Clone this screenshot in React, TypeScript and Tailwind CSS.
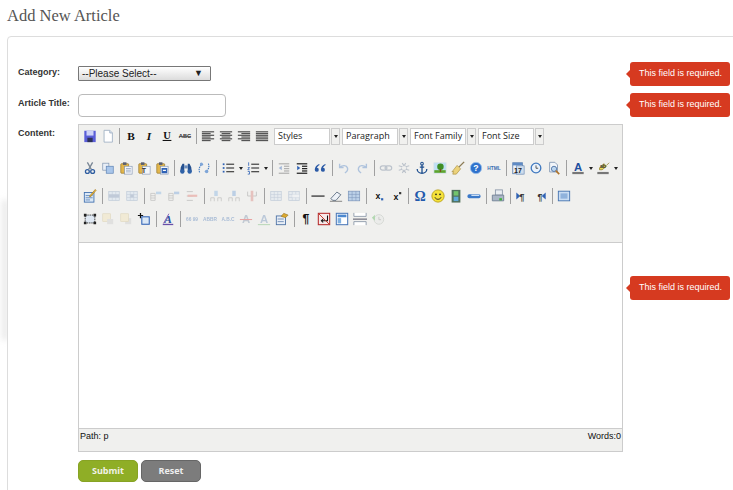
import React from 'react';

const T = ({ c, s = 12, f = 'Liberation Serif', w = 'bold', i = false, y = 12, fill = '#111' }: { c: string; s?: number; f?: string; w?: string; i?: boolean; y?: number; fill?: string }) => (
  <text x="8" y={y} textAnchor="middle" fontFamily={f} fontWeight={w} fontStyle={i ? 'italic' : 'normal'} fontSize={s} fill={fill}>{c}</text>
);

// horizontal bars, used by the align and list icons
const Bars = ({ rows, color = '#444', h = 1.4 }: { rows: [number, number, number][]; color?: string; h?: number }) => (
  <>
    {rows.map(([x, y, w], i) => <rect key={i} x={x} y={y} width={w} height={h} fill={color} />)}
  </>
);

const align = (kind: string) => {
  const ys = [2.5, 4.5, 6.5, 8.5, 10.5, 12.5];
  const ws = [14, 10, 14, 10, 14, 10];
  return ys.map((y, i): [number, number, number] => {
    const w = kind === 'full' ? 14 : ws[i];
    const x = kind === 'left' || kind === 'full' ? 1 : kind === 'right' ? 15 - w : 8 - w / 2;
    return [x, y, w];
  });
};

const Clip = ({ children }: { children?: React.ReactNode }) => (
  <>
    <rect x="2" y="3" width="9" height="11" rx="1" fill="#e2b64c" stroke="#8a6a20" strokeWidth=".7" />
    <rect x="4.500" y="1.500" width="4" height="3" fill="#5a5f70" />
    <rect x="6.500" y="6" width="8.500" height="9" fill="#f4f6fa" stroke="#7f93b0" strokeWidth=".7" />
    {children}
  </>
);

const Grid = ({ x = 2, y = 3, w = 12, h = 10, fill = '#cfe0f2' }: { x?: number; y?: number; w?: number; h?: number; fill?: string }) => (
  <>
    <rect x={x} y={y} width={w} height={h} fill={fill} stroke="#7a94b8" strokeWidth=".8" />
    <path d={`M${x} ${y + h / 3}h${w}M${x} ${y + (2 * h) / 3}h${w}M${x + w / 3} ${y}v${h}M${x + (2 * w) / 3} ${y}v${h}`} stroke="#7a94b8" strokeWidth=".6" />
  </>
);

const Tiny = ({ c, fill = '#3b6cb0' }: { c: string; fill?: string }) => <T c={c} s={5.5} f="Liberation Sans" y={10} fill={fill} />;

const Rows = ({ accent }: { accent: string }) => (
  <>
    <path d="M2 5h5v8H2zM2 7.700h5M2 10.300h5" fill="none" stroke="#777" strokeWidth=".8" />
    <rect x="8" y="3" width="6" height="3" fill={accent} />
  </>
);

const Cols = ({ accent }: { accent: string }) => (
  <>
    <path d="M2 14v-4h4v4M10 14v-4h4v4" fill="none" stroke="#777" strokeWidth=".8" />
    <rect x="6" y="2" width="4" height="6" fill={accent} />
  </>
);

const ICONS: Record<string, React.ReactNode> = {
  save: (
    <>
      <rect x="1.500" y="2" width="13" height="13" fill="#5a5ed8" />
      <rect x="4" y="2" width="8" height="5.500" fill="#cfd3f8" />
      <rect x="5" y="10" width="6" height="5" fill="#2d3158" />
    </>
  ),
  newdoc: (
    <>
      <path d="M3.500 1.500h6.500l3 3v10.500h-9.500z" fill="#fff" stroke="#9fb0c4" />
      <path d="M10 1.500v3h3" fill="#dbe4ef" stroke="#9fb0c4" />
    </>
  ),
  bold: <T c="B" s={13} />,
  italic: <T c="I" i s={13} />,
  underline: (
    <>
      <T c="U" y={11} s={12} />
      <rect x="3" y="12.500" width="10" height="1.200" fill="#111" />
    </>
  ),
  strike: (
    <>
      <T c="ABC" s={6.500} f="Liberation Sans" y={10.500} fill="#333" />
      <rect x="1" y="8" width="14" height="1" fill="#555" />
    </>
  ),
  left: <Bars rows={align('left')} color="#555" />,
  center: <Bars rows={align('center')} color="#555" />,
  right: <Bars rows={align('right')} color="#555" />,
  full: <Bars rows={align('full')} color="#555" />,
  cut: (
    <>
      <path d="M5 1.500l4.500 8M11 1.500l-4.500 8" stroke="#7a8796" strokeWidth="1.500" fill="none" />
      <circle cx="5" cy="12" r="2.200" fill="none" stroke="#2f5da0" strokeWidth="1.500" />
      <circle cx="11" cy="12" r="2.200" fill="none" stroke="#2f5da0" strokeWidth="1.500" />
    </>
  ),
  copy: (
    <>
      <rect x="2" y="2.500" width="7" height="8" fill="#e8eef6" stroke="#7f93b0" strokeWidth=".8" />
      <rect x="6" y="6" width="8" height="8" fill="#a9c6ea" stroke="#5d82b4" strokeWidth=".8" />
    </>
  ),
  paste: <Clip><Bars rows={[[8, 8, 5.500], [8, 10, 5.500], [8, 12, 5.500]]} color="#8fa3c0" h={.9} /></Clip>,
  pastetext: <Clip><T c="T" s={8} f="Liberation Sans" y={14} fill="#333" /></Clip>,
  pasteword: <Clip><rect x="7.500" y="8" width="6.500" height="6" fill="#2f62b5" /><Bars rows={[[9, 10, 3.500]]} color="#fff" /></Clip>,
  find: (
    <>
      <path d="M2 7l2-4h2v9H1.500zM14 7l-2-4h-2v9h4.500z" fill="#25508f" />
      <rect x="6" y="5" width="4" height="3.500" fill="#6d8fbe" />
      <circle cx="3.800" cy="12" r="2.500" fill="#2f62a8" />
      <circle cx="12.200" cy="12" r="2.500" fill="#2f62a8" />
    </>
  ),
  replace: (
    <>
      <path d="M3 13C1.500 9 3 5 7 4" fill="none" stroke="#3f78c0" strokeWidth="1.300" strokeDasharray="1.500 1" />
      <path d="M13 3c1.500 4 0 8-4 9" fill="none" stroke="#3f78c0" strokeWidth="1.300" strokeDasharray="1.500 1" />
      <circle cx="11" cy="12" r="2" fill="#7fa6d8" />
      <circle cx="5" cy="3.500" r="1.800" fill="#7fa6d8" />
    </>
  ),
  ul: (
    <>
      <Bars rows={[[6, 3, 9], [6, 7.300, 9], [6, 11.500, 9]]} />
      <Bars rows={[[2, 2.700, 2], [2, 7, 2], [2, 11.200, 2]]} color="#2f62b5" h={2} />
    </>
  ),
  ol: (
    <>
      <Bars rows={[[6, 3, 9], [6, 7.300, 9], [6, 11.500, 9]]} />
      <path d="M3 1.500v4M2 7.500h2l-2 2.500h2M2 12h2v3h-2" fill="none" stroke="#2f62b5" strokeWidth=".9" />
    </>
  ),
  outdent: (
    <>
      <Bars rows={[[2, 2.500, 12], [8, 5.300, 6], [8, 8, 6], [8, 10.700, 6], [2, 13.300, 12]]} color="#555" />
      <path d="M2 8l3.500-2.500v5z" fill="#2f62b5" />
    </>
  ),
  indent: (
    <>
      <Bars rows={[[2, 2.500, 12], [8, 5.300, 6], [8, 8, 6], [8, 10.700, 6], [2, 13.300, 12]]} color="#222" />
      <path d="M6 8L2.500 5.500v5z" fill="#2f62b5" />
    </>
  ),
  quote: (
    <>
      <path d="M7 3.500C4 5 2 7 2 10a2.300 2.300 0 1 0 2.500-2.200C5 6.300 6 5.300 7.500 4.500z" fill="#2b5aa6" />
      <path d="M14 3.500c-3 1.500-5 3.500-5 6.500a2.300 2.300 0 1 0 2.500-2.200c.5-1.500 1.500-2.500 3-3.300z" fill="#2b5aa6" />
    </>
  ),
  undo: <path d="M3 3v4.500h4.500M3.500 7C6 4.500 11 4.500 12 8c.6 2.500-1 4.500-3 5.500" fill="none" stroke="#4f82c4" strokeWidth="1.600" />,
  redo: <path d="M13 3v4.500H8.500M12.500 7C10 4.500 5 4.500 4 8c-.6 2.500 1 4.500 3 5.500" fill="none" stroke="#4f82c4" strokeWidth="1.600" />,
  link: (
    <>
      <rect x="1.500" y="5.500" width="7.500" height="5" rx="2.500" fill="none" stroke="#6f8099" strokeWidth="1.400" />
      <rect x="7" y="5.500" width="7.500" height="5" rx="2.500" fill="none" stroke="#6f8099" strokeWidth="1.400" />
    </>
  ),
  unlink: (
    <>
      <path d="M6 2.500l2 3 2-3M6 13.500l2-3 2 3M2 5.500l4 1M14 5.500l-4 1M2 10.500l4-1M14 10.500l-4-1" fill="none" stroke="#6f8099" strokeWidth="1.300" />
      <circle cx="8" cy="8" r="3" fill="none" stroke="#6f8099" strokeWidth="1.100" strokeDasharray="1.500 1" />
    </>
  ),
  anchor: (
    <>
      <circle cx="8" cy="3" r="1.500" fill="none" stroke="#1f4f8f" strokeWidth="1.200" />
      <path d="M8 4.500v9.500M5.500 7h5M2.500 9c0 3 2.500 5 5.500 5s5.500-2 5.500-5" fill="none" stroke="#1f4f8f" strokeWidth="1.500" />
    </>
  ),
  image: (
    <>
      <rect x="1" y="2" width="14" height="12" fill="#bfe0f5" stroke="#d8dfe6" strokeWidth=".8" />
      <rect x="1.500" y="10.500" width="13" height="3" fill="#5fa52c" />
      <circle cx="8.500" cy="6.500" r="3.700" fill="#3f8f25" />
      <rect x="7.700" y="9" width="1.600" height="3.500" fill="#7a4f1d" />
    </>
  ),
  cleanup: (
    <>
      <path d="M15 1L9 7" stroke="#8b7a55" strokeWidth="1.600" />
      <path d="M7 5l4 4-5 6H2l1-3-2 .5z" fill="#ecd27a" stroke="#a58a3a" strokeWidth=".7" />
    </>
  ),
  help: (
    <>
      <circle cx="8" cy="8" r="6.500" fill="#2f72cc" stroke="#9cc0ea" />
      <T c="?" s={10} f="Liberation Sans" y={11.500} fill="#fff" />
    </>
  ),
  html: <Tiny c="HTML" />,
  date: (
    <>
      <rect x="2" y="2" width="11" height="12.500" fill="#eef3f9" stroke="#5f82b0" />
      <rect x="2" y="2" width="11" height="3" fill="#5f8ac4" />
      <rect x="6" y="5.500" width="9" height="9.500" fill="#cfdded" stroke="#5f82b0" strokeWidth=".7" />
      <T c="17" s={8} f="Liberation Sans" y={13.500} fill="#222" />
    </>
  ),
  time: (
    <>
      <circle cx="8" cy="8" r="5.500" fill="#eaf2fb" stroke="#3f78bf" strokeWidth="1.500" />
      <path d="M8 5v3.300h2.500" fill="none" stroke="#333" strokeWidth=".9" />
    </>
  ),
  preview: (
    <>
      <path d="M3 1.500h6l3 3v8H3z" fill="#f3f6fa" stroke="#8498b4" />
      <circle cx="8" cy="9" r="3" fill="#bcd6ef" stroke="#4b70a3" />
      <path d="M10 11l4 4" stroke="#b0742a" strokeWidth="1.800" />
    </>
  ),
  fore: (
    <>
      <T c="A" s={13} f="Liberation Sans" y={11.500} fill="#1f4f9f" />
      <rect x="1.500" y="12.500" width="13" height="2.500" fill="#777" />
    </>
  ),
  back: (
    <>
      <path d="M4 8l5-5 3 3-5 4H4zM12 5l3-3" fill="#eadb55" stroke="#8a7a20" strokeWidth=".8" />
      <T c="ab" s={6} f="Liberation Sans" y={8} fill="#333" />
      <rect x="1.500" y="12.500" width="13" height="2.500" fill="#777" />
    </>
  ),
  tablectl: (
    <>
      <rect x="1.500" y="4" width="11" height="11" fill="#dbe8f6" stroke="#3f6fae" />
      <path d="M3 7.500h8M3 10h8M3 12.500h5" stroke="#3f6fae" strokeWidth=".8" />
      <path d="M15 1.500l-6 7-1.500.5.500-1.500 6-7z" fill="#e8b93c" stroke="#a5741d" strokeWidth=".7" />
    </>
  ),
  rowprops: (
    <>
      <Grid />
      <rect x="2" y="6.300" width="12" height="3.300" fill="#7a94b8" />
    </>
  ),
  cellprops: (
    <>
      <Grid />
      <rect x="6" y="6.300" width="4" height="3.300" fill="#7a94b8" />
    </>
  ),
  rowa: <Rows accent="#7fb0e0" />,
  rowb: <Rows accent="#6fa0d8" />,
  rowdel: (
    <>
      <path d="M2 3h7M2 8h7M2 13h7" stroke="#777" strokeWidth=".9" />
      <rect x="3" y="6.500" width="11" height="2.500" fill="#e2766c" />
    </>
  ),
  cola: <Cols accent="#7fb0e0" />,
  colb: <Cols accent="#6fa0d8" />,
  coldel: (
    <>
      <path d="M3 3v5h10V3" fill="none" stroke="#777" strokeWidth=".9" />
      <rect x="6.500" y="2" width="3" height="12" fill="#d98078" />
    </>
  ),
  split: <Grid fill="#d8e4f2" />,
  merge: (
    <>
      <Grid fill="#d8e4f2" />
      <rect x="6" y="6.300" width="8" height="3.300" fill="#eef4fb" />
    </>
  ),
  hr: <rect x="0.500" y="7.300" width="15" height="1.600" fill="#444" />,
  removefmt: (
    <>
      <path d="M2 11l7-7.500 4.500 3L8 13H4.500z" fill="#eef2f7" stroke="#5a6b80" />
      <rect x="1" y="13.500" width="14" height="1" fill="#777" />
    </>
  ),
  table: <Grid x={1.500} y={2.500} w={13} h={11} fill="#bcd1e8" />,
  sub: (
    <>
      <T c="x" s={10} f="Liberation Sans" y={11} />
      <rect x="11.500" y="10.500" width="2.500" height="2.500" fill="#2f62b5" />
    </>
  ),
  sup: (
    <>
      <T c="x" s={10} f="Liberation Sans" y={12} />
      <rect x="11.500" y="3.500" width="2.500" height="2.500" fill="#333" />
    </>
  ),
  omega: <T c={'\u03A9'} s={16} f="Liberation Serif" y={14} fill="#2259ac" />,
  smiley: (
    <>
      <circle cx="8" cy="8" r="7" fill="#f5e23a" stroke="#b8a018" />
      <circle cx="5.700" cy="6" r="1" fill="#222" />
      <circle cx="10.300" cy="6" r="1" fill="#222" />
      <path d="M4.500 9.500c1 3 6 3 7 0" fill="none" stroke="#222" />
    </>
  ),
  media: (
    <>
      <rect x="3" y="1" width="10" height="14.500" fill="#50705c" />
      <rect x="5.300" y="2.500" width="5.400" height="5" fill="#72c46c" />
      <rect x="5.300" y="8.800" width="5.400" height="5" fill="#5fa8d8" />
    </>
  ),
  bar: (
    <>
      <rect x="0.500" y="6" width="15" height="4.500" rx="2" fill="#3c79c8" />
      <rect x="5" y="6.500" width="9" height="1.500" fill="#cde0f5" />
    </>
  ),
  print: (
    <>
      <rect x="5" y="1" width="8" height="6" fill="#e9edf2" stroke="#8a97a8" />
      <path d="M1.500 7h13v6.500h-13z" fill="#aab6c6" stroke="#6f7f94" />
      <rect x="9.500" y="10.500" width="3" height="2.500" fill="#3fb03a" />
    </>
  ),
  ltr: (
    <>
      <path d="M1.500 4v8L6 8z" fill="#2f62b5" />
      <T c={'\u00B6'} s={10} f="Liberation Sans" y={12} fill="#333" />
    </>
  ),
  rtl: (
    <>
      <T c={'\u00B6'} s={10} f="Liberation Sans" y={12} fill="#333" />
      <path d="M14.500 4v8L10 8z" fill="#2f62b5" />
    </>
  ),
  fullscreen: (
    <>
      <rect x="1.500" y="2.500" width="13" height="11" fill="#c9ddf3" stroke="#3f6fae" />
      <rect x="4" y="5" width="8" height="6" fill="#8fb2dc" />
    </>
  ),
  box: (
    <>
      <rect x="2.500" y="3.500" width="11" height="9" fill="#dfe8f3" stroke="#222" strokeDasharray="1.500 1" />
      <path d="M1 2h3v3H1zM12 2h3v3h-3zM1 11h3v3H1zM12 11h3v3h-3z" fill="#222" />
    </>
  ),
  layera: (
    <>
      <rect x="2" y="2" width="9" height="9" fill="#f3e3b0" stroke="#c7b27a" strokeWidth=".7" />
      <rect x="7" y="8" width="7" height="6" fill="#c9c9c9" />
    </>
  ),
  layerb: (
    <>
      <rect x="7" y="7" width="7" height="7" fill="#c9c9c9" />
      <rect x="2" y="2" width="9" height="9" fill="#f3e3b0" stroke="#c7b27a" strokeWidth=".7" />
    </>
  ),
  abs: (
    <>
      <path d="M4 1v6M1 4h6" stroke="#111" strokeWidth="1.400" />
      <rect x="5.500" y="5.500" width="8.500" height="8.500" fill="#dbe8f6" stroke="#2f62b5" strokeWidth="1.200" />
    </>
  ),
  style: (
    <>
      <T c="A" s={13} f="Liberation Serif" i y={12} fill="#2d4f9e" />
      <path d="M9 2L3 13" stroke="#7a52b0" strokeWidth="1" />
      <rect x="2" y="13.500" width="12" height="1.500" fill="#6a4fa8" />
    </>
  ),
  cite: <Tiny c="66 99" />,
  acronym: <Tiny c="ABBR" />,
  abbr: <Tiny c="A.B.C" />,
  del: (
    <>
      <T c="A" s={13} f="Liberation Sans" y={13} fill="#7e93ad" />
      <rect x="1" y="8" width="14" height="1.200" fill="#d33" />
    </>
  ),
  ins: (
    <>
      <T c="A" s={13} f="Liberation Sans" y={13} fill="#6f90ba" />
      <rect x="1" y="14" width="14" height="1" fill="#4fa84f" />
    </>
  ),
  attr: (
    <>
      <rect x="1.500" y="4.500" width="10.500" height="10" fill="#e8eef6" stroke="#4b70a3" />
      <path d="M3 8h7M3 11h7" stroke="#4b70a3" strokeWidth=".8" />
      <path d="M7 5l3-3.500 5 2-3 3z" fill="#dca92e" stroke="#8a6a20" strokeWidth=".6" />
    </>
  ),
  pilcrow: <T c={'\u00B6'} s={14} f="Liberation Sans" y={13} fill="#111" />,
  nonbreak: (
    <>
      <rect x="1.500" y="1.500" width="13" height="13" fill="#f7e9e9" stroke="#b52a2a" strokeWidth="1.200" />
      <path d="M12 4v6H5M7 8l-2 2 2 2" fill="none" stroke="#111" strokeWidth="1.200" />
      <path d="M2 2l12 12" stroke="#c0392b" strokeWidth="1.100" />
    </>
  ),
  template: (
    <>
      <rect x="1.500" y="1.500" width="13" height="13" fill="#fff" stroke="#4b78b8" strokeWidth="1.200" />
      <rect x="3" y="3" width="10" height="3" fill="#4b88d0" />
      <rect x="3" y="7" width="4" height="6" fill="#7fb0e0" />
    </>
  ),
  pagebreak: (
    <>
      <path d="M1 1v4h14V1M1 15v-4h14v4" fill="#fff" stroke="#8a97a8" />
      <rect x="0" y="7.500" width="16" height="1.300" fill="#667" />
    </>
  ),
  restore: (
    <>
      <circle cx="9" cy="8.500" r="5.500" fill="#e6e8e6" stroke="#a8b0a8" />
      <path d="M9 5.500v3.300h2.500" fill="none" stroke="#888" />
      <path d="M1 6.500l3.500-3.500v7z" fill="#55b455" />
    </>
  ),
};

const DIM = new Set(['outdent', 'undo', 'redo', 'link', 'unlink', 'rowprops', 'cellprops', 'rowa', 'rowb', 'rowdel', 'cola', 'colb', 'coldel', 'split', 'merge', 'layera', 'layerb', 'cite', 'acronym', 'abbr', 'del', 'ins', 'restore']);

function ToolItem({ name }: { name: string }) {
  if (name === '|' || name === '|5') {
    return (
      <span className={`flex h-5 items-center justify-center ${name === '|' ? 'w-[6px]' : 'w-[5px]'}`}>
        <span className="h-[16px] w-px bg-[#a0a0a0]" />
      </span>
    );
  }
  if (name === 'v') {
    return (
      <span className="flex h-5 w-[7px] items-center justify-center">
        <span className="h-0 w-0 border-x-[2.5px] border-t-[3px] border-x-transparent border-t-[#222]" />
      </span>
    );
  }
  return (
    <span className="flex h-5 w-[18px] items-center justify-center">
      <svg width="14" height="14" viewBox="0 0 16 16" className={DIM.has(name) ? 'opacity-40' : ''}>
        {ICONS[name]}
      </svg>
    </span>
  );
}

function ToolSelect({ label }: { label: string }) {
  return (
    <div className="ml-[2px] flex h-[17px] items-stretch">
      <div className="flex w-[56px] items-center border border-[#cccccc] bg-white pl-[3px] font-['Open_Sans',sans-serif] text-[9px] text-[#222]">
        {label}
      </div>
      <div className="ml-px flex w-[9px] items-center justify-center border border-[#cccccc] bg-[#f0f0ee]">
        <span className="h-0 w-0 border-x-[2.5px] border-t-[3px] border-x-transparent border-t-[#222]" />
      </div>
    </div>
  );
}

const ROW1 = ['save', 'newdoc', '|5', 'bold', 'italic', 'underline', 'strike', '|5', 'left', 'center', 'right', 'full'];
const ROW2 = ['cut', 'copy', 'paste', 'pastetext', 'pasteword', '|', 'find', 'replace', '|', 'ul', 'v', 'ol', 'v', '|', 'outdent', 'indent', 'quote', '|', 'undo', 'redo', '|', 'link', 'unlink', 'anchor', 'image', 'cleanup', 'help', 'html', '|', 'date', 'time', 'preview', '|', 'fore', 'v', 'back', 'v'];
const ROW3 = ['tablectl', '|', 'rowprops', 'cellprops', '|', 'rowa', 'rowb', 'rowdel', '|', 'cola', 'colb', 'coldel', '|', 'split', 'merge', '|', 'hr', 'removefmt', 'table', '|', 'sub', 'sup', '|', 'omega', 'smiley', 'media', 'bar', '|', 'print', '|', 'ltr', 'rtl', '|', 'fullscreen'];
const ROW4 = ['box', 'layera', 'layerb', 'abs', '|', 'style', '|', 'cite', 'acronym', 'abbr', 'del', 'ins', 'attr', '|', 'pilcrow', 'nonbreak', 'template', 'pagebreak', 'restore'];

function Tooltip() {
  return (
    <div className="relative ml-[7px] flex h-6 w-[100px] shrink-0 items-center rounded-[3px] bg-[#d63a20] pb-px pl-[9px] font-['Liberation_Sans',sans-serif] text-[9px] text-white">
      <span className="absolute left-[-4px] top-[8px] h-0 w-0 border-y-4 border-r-4 border-y-transparent border-r-[#d63a20]" />
      This field is required.
    </div>
  );
}

export default function App() {
  return (
    <div className="relative h-[490px] w-[733px] overflow-hidden bg-white font-['Liberation_Sans',sans-serif]">
      {/* faint page shadow left of the panel */}
      <div className="absolute left-[2px] top-[200px] h-[140px] w-[6px] bg-[#e8e8e8] blur-[3px]" />
      <h1 className="relative h-[36px] pl-[7px] pt-[6px] font-['Liberation_Serif',serif] text-[16.5px] leading-5 text-[#555]">Add New Article</h1>
      <div className="relative ml-[7px] flex h-[500px] w-[760px] flex-col gap-[7px] rounded-tl-[4px] border border-[#dddddd] bg-white pl-[10px] pt-[25px]">
        <div className="flex items-center">
          <label className="h-6 w-[60px] shrink-0 pt-1 text-[9px] font-bold leading-3 text-[#333]">Category:</label>
          <div className="w-[545px] shrink-0">
            <div className="-mt-px flex h-[15px] w-[133px] items-center justify-between rounded-[1px] border border-[#777] bg-gradient-to-b from-white to-[#dcdcdc] pl-[3px] pr-[7px] text-[10px] text-[#222]">
              <span>--Please Select--</span>
              <span className="text-[9px]">▼</span>
            </div>
          </div>
          <Tooltip />
        </div>

        <div className="flex items-center">
          <label className="h-6 w-[60px] shrink-0 pt-1 text-[9px] font-bold leading-3 text-[#333]">Article Title:</label>
          <div className="w-[545px] shrink-0">
            <input className="block h-[23px] w-[148px] rounded-[4px] border border-[#bbbbbb] bg-white outline-none" />
          </div>
          <Tooltip />
        </div>

        <div className="flex items-center">
          <label className="w-[60px] shrink-0 self-start pt-[3px] text-[9px] font-bold leading-3 text-[#333]">Content:</label>
          <div className="w-[545px] shrink-0 border border-[#cccccc]">
            <div className="h-[117px] bg-[#f0f0ee] pl-[2px] pt-px">
              <div className="flex items-center">
                {ROW1.map((n, i) => <ToolItem key={i} name={n} />)}
                <div className="ml-px flex">
                  <ToolSelect label="Styles" />
                  <ToolSelect label="Paragraph" />
                  <ToolSelect label="Font Family" />
                  <ToolSelect label="Font Size" />
                </div>
              </div>
              <div className="mt-3 flex">{ROW2.map((n, i) => <ToolItem key={i} name={n} />)}</div>
              <div className="mt-2 flex">{ROW3.map((n, i) => <ToolItem key={i} name={n} />)}</div>
              <div className="mt-[3px] flex">{ROW4.map((n, i) => <ToolItem key={i} name={n} />)}</div>
            </div>
            <div className="h-[186px] border-t border-[#cccccc] bg-white" />
            <div className="flex h-[23px] justify-between border-t border-[#cccccc] bg-[#f0f0ee] px-px pt-px text-[9px] leading-3 text-[#111]">
              <span>Path: p</span>
              <span>Words:0</span>
            </div>
          </div>
          <Tooltip />
        </div>

        <div className="ml-[60px] mt-px flex gap-[3px]">
          <button className="h-[22px] w-[60px] rounded-[5px] border border-[#87a324] bg-[#8fae26] font-['Open_Sans',sans-serif] text-[9px] font-bold text-[#f2f2e8]">Submit</button>
          <button className="h-[22px] w-[60px] rounded-[5px] border border-[#666] bg-[#7c7c7c] font-['Open_Sans',sans-serif] text-[9px] font-bold text-[#eeeeee]">Reset</button>
        </div>
      </div>
    </div>
  );
}
